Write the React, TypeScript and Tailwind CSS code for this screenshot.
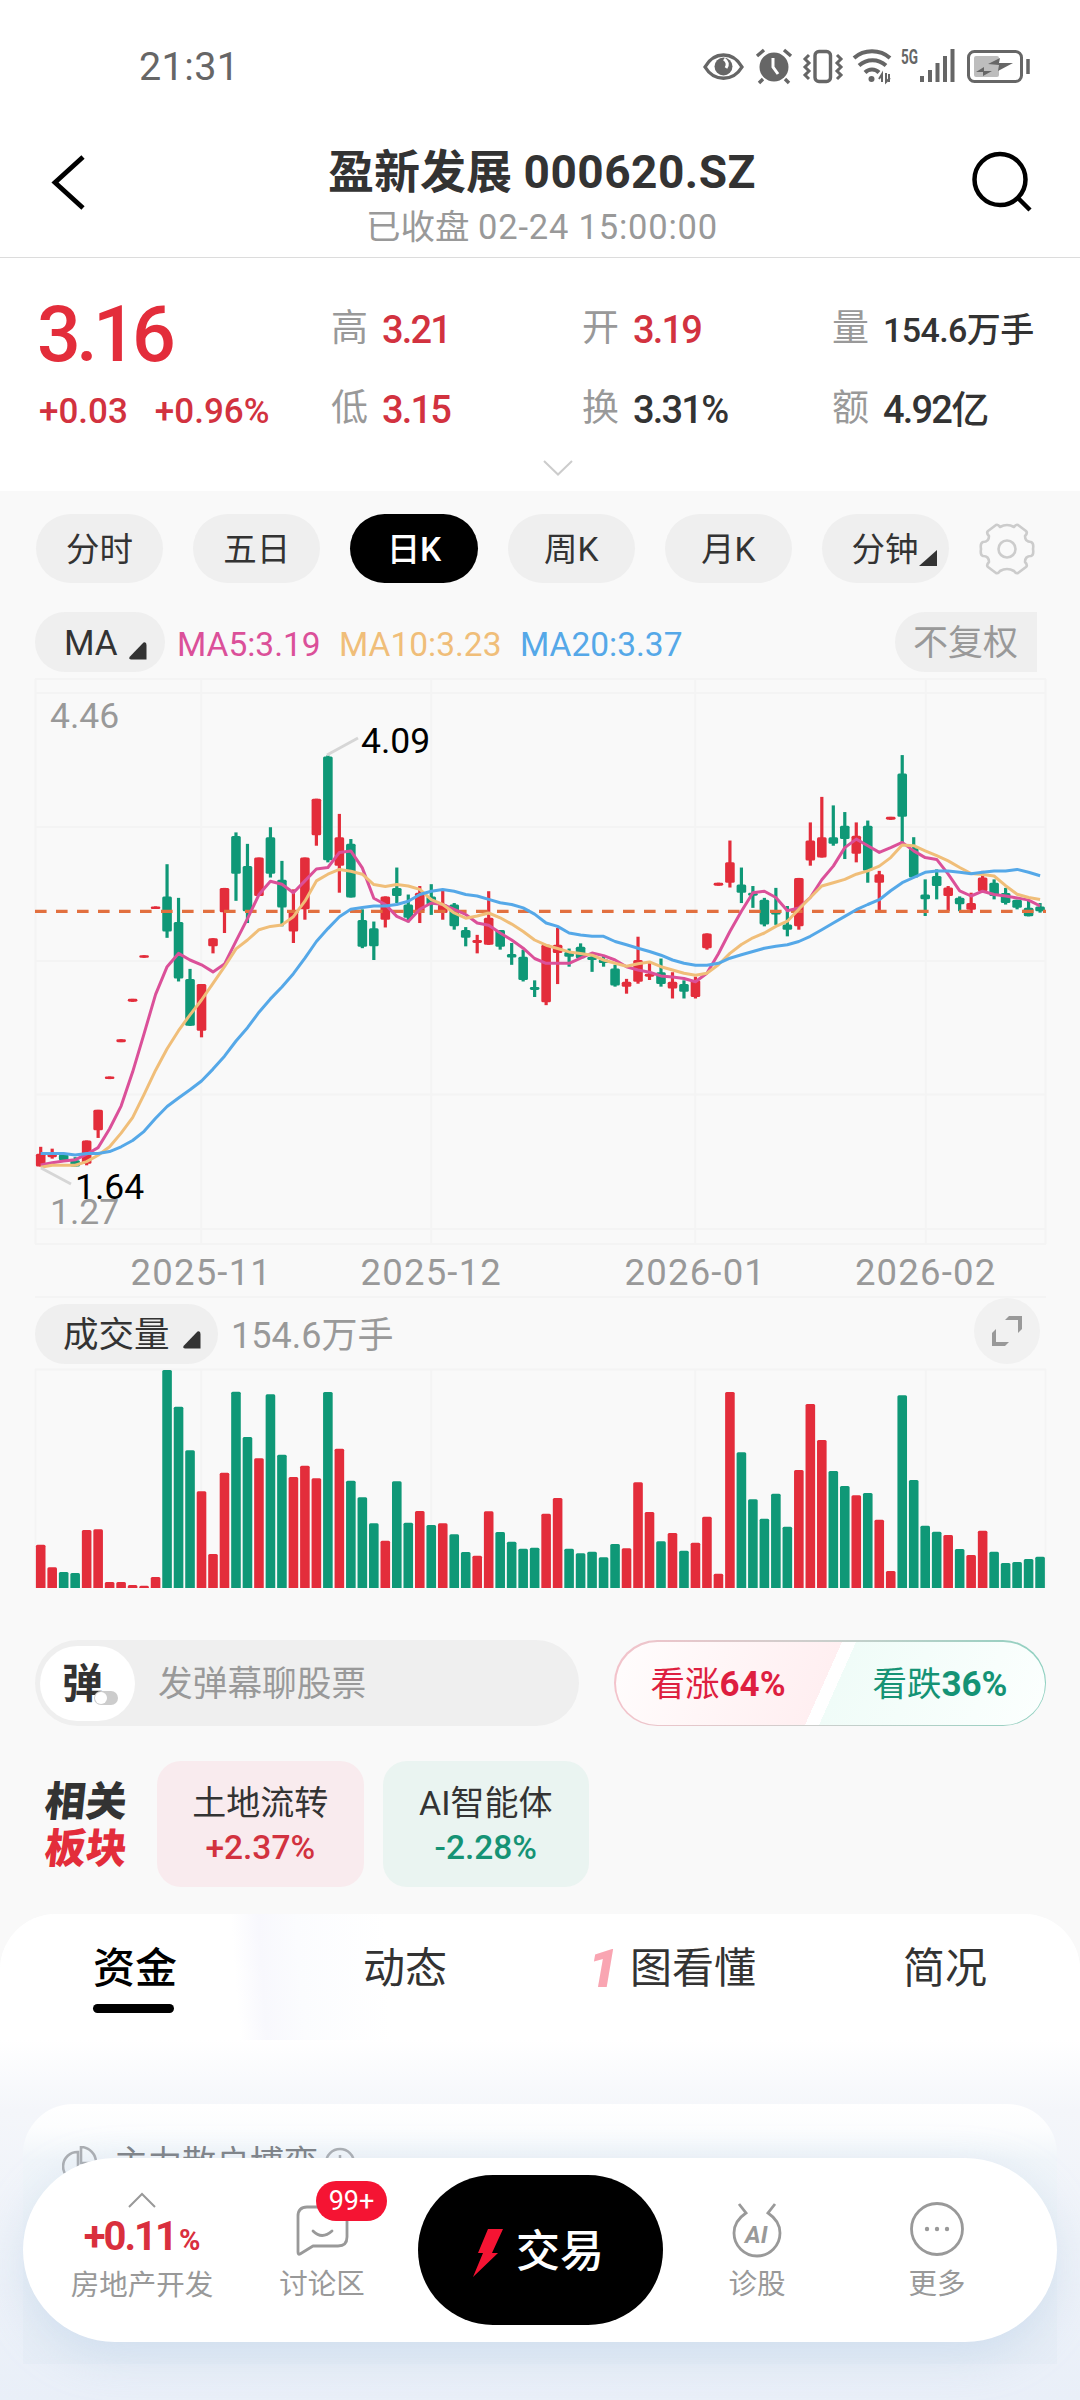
import type { ReactNode } from "react";

const RED = "#e32d3b";
const GREEN = "#0f9877";

// [direction, high, body top, body bottom, low, volume]
type Candle = ["r" | "g", number, number, number, number, number];

const CANDLES: Candle[] = [
  ["r", 1262, 1281, 1315, 1315, 130],
  ["r", 1267, 1282, 1290, 1294, 62],
  ["g", 1283, 1283, 1298, 1298, 48],
  ["g", 1290, 1298, 1315, 1315, 45],
  ["r", 1245, 1245, 1308, 1312, 174],
  ["r", 1162, 1162, 1217, 1238, 176],
  ["r", 1072, 1072, 1079, 1079, 18],
  ["r", 971, 971, 979, 979, 18],
  ["r", 862, 862, 870, 870, 9],
  ["r", 744, 744, 751, 751, 7],
  ["r", 612, 612, 619, 619, 33],
  ["g", 498, 585, 680, 697, 654],
  ["g", 589, 654, 807, 815, 544],
  ["g", 781, 808, 935, 935, 413],
  ["r", 822, 822, 948, 966, 290],
  ["r", 698, 698, 720, 739, 102],
  ["r", 562, 562, 628, 684, 346],
  ["g", 412, 422, 524, 597, 589],
  ["g", 443, 503, 625, 657, 453],
  ["r", 480, 480, 584, 584, 389],
  ["g", 398, 425, 524, 534, 581],
  ["g", 489, 540, 615, 666, 400],
  ["r", 566, 622, 680, 711, 333],
  ["r", 480, 480, 620, 648, 367],
  ["r", 321, 321, 420, 448, 329],
  ["g", 204, 207, 487, 493, 588],
  ["r", 362, 425, 502, 575, 418],
  ["g", 430, 443, 588, 588, 322],
  ["g", 620, 649, 721, 725, 272],
  ["g", 653, 671, 720, 757, 194],
  ["r", 585, 585, 648, 669, 142],
  ["g", 507, 562, 584, 603, 320],
  ["g", 580, 607, 643, 655, 196],
  ["r", 557, 575, 625, 657, 231],
  ["g", 552, 585, 607, 635, 189],
  ["r", 566, 607, 630, 648, 194],
  ["g", 603, 607, 666, 675, 161],
  ["g", 668, 676, 697, 720, 108],
  ["r", 689, 703, 711, 739, 97],
  ["r", 571, 643, 716, 716, 230],
  ["g", 676, 676, 721, 729, 168],
  ["g", 711, 741, 750, 770, 139],
  ["g", 729, 748, 811, 815, 118],
  ["g", 812, 830, 838, 857, 121],
  ["r", 716, 716, 871, 879, 223],
  ["r", 670, 716, 738, 822, 270],
  ["g", 726, 735, 748, 775, 118],
  ["g", 712, 721, 752, 752, 104],
  ["g", 740, 748, 757, 789, 109],
  ["g", 744, 755, 765, 775, 92],
  ["g", 770, 780, 826, 829, 132],
  ["r", 808, 816, 829, 848, 119],
  ["r", 694, 757, 816, 821, 317],
  ["r", 762, 794, 802, 811, 228],
  ["g", 753, 790, 822, 829, 140],
  ["r", 790, 816, 834, 861, 165],
  ["g", 812, 822, 843, 861, 112],
  ["r", 802, 812, 857, 861, 136],
  ["r", 685, 685, 725, 729, 214],
  ["r", 548, 548, 556, 556, 43],
  ["r", 434, 493, 548, 561, 588],
  ["g", 507, 553, 575, 603, 407],
  ["g", 557, 575, 583, 616, 266],
  ["g", 589, 594, 661, 666, 208],
  ["g", 562, 625, 634, 662, 283],
  ["g", 611, 661, 675, 693, 184],
  ["r", 535, 535, 666, 675, 354],
  ["r", 385, 434, 488, 502, 552],
  ["r", 316, 425, 480, 480, 444],
  ["g", 339, 425, 443, 448, 351],
  ["g", 357, 394, 430, 484, 306],
  ["r", 385, 421, 470, 493, 278],
  ["g", 380, 394, 516, 548, 285],
  ["r", 516, 525, 548, 625, 205],
  ["r", 370, 370, 378, 378, 51],
  ["g", 203, 253, 370, 440, 578],
  ["g", 425, 455, 534, 534, 324],
  ["g", 539, 580, 593, 638, 187],
  ["g", 512, 530, 557, 593, 169],
  ["r", 557, 561, 584, 625, 159],
  ["g", 585, 589, 606, 625, 117],
  ["r", 575, 603, 621, 630, 99],
  ["r", 516, 534, 571, 571, 172],
  ["g", 539, 548, 584, 593, 109],
  ["g", 562, 576, 603, 607, 75],
  ["g", 594, 594, 616, 620, 78],
  ["g", 594, 616, 639, 639, 87],
  ["g", 603, 612, 625, 629, 94],
];

const MA5 = [
  1311, 1305, 1300, 1297, 1282, 1264, 1213, 1152, 1060, 956, 850, 775, 739, 757, 770, 789, 768, 706, 645, 580, 544,
  552, 575, 543, 511, 507, 466, 462, 508, 590, 607, 639, 653, 620, 603, 607, 620, 634, 657, 663, 684, 703, 725, 753,
  766, 766, 766, 752, 738, 745, 757, 775, 784, 790, 800, 803, 807, 816, 793, 740, 680, 625, 575, 571, 588, 624, 616,
  588, 540, 503, 453, 430, 448, 466, 453, 439, 462, 480, 485, 525, 570, 584, 571, 580, 584, 589, 595, 611,
];

const MA10 = [
  1317, 1312, 1312, 1312, 1302, 1285, 1262, 1225, 1183, 1120, 1055, 997, 948, 905, 865, 820, 775, 727, 703, 675, 666,
  662, 640, 598, 543, 525, 512, 517, 525, 553, 558, 553, 557, 566, 594, 607, 630, 644, 638, 630, 643, 660, 680, 703,
  717, 726, 735, 739, 744, 757, 766, 774, 767, 762, 775, 784, 793, 798, 793, 770, 739, 715, 697, 684, 666, 652, 620,
  588, 557, 548, 539, 525, 516, 503, 480, 446, 448, 462, 475, 489, 507, 523, 526, 530, 556, 579, 588, 593,
];

const MA20 = [
  1280, 1280, 1280, 1284, 1280, 1280, 1275, 1262, 1245, 1220, 1185, 1153, 1130, 1108, 1084, 1052, 1017, 976, 940, 898,
  862, 830, 794, 752, 707, 672, 640, 620, 615, 611, 611, 607, 598, 580, 571, 566, 571, 580, 584, 593, 602, 607, 616,
  633, 657, 666, 684, 689, 693, 693, 707, 716, 725, 734, 744, 757, 766, 771, 771, 766, 752, 743, 734, 725, 720, 716,
  707, 693, 675, 657, 639, 621, 607, 594, 570, 548, 534, 520, 516, 516, 520, 524, 520, 516, 516, 512, 520, 529,
];

const GRID_X = [201.3, 431.3, 695.3, 925.7];
const MONTHS = ["2025-11", "2025-12", "2026-01", "2026-02"];

const px = (i: number) => 40.7 + i * 11.487;
const py = (v: number) => 4 + v * 0.3699;
const linePoints = (values: number[]) => values.map((v, i) => `${px(i).toFixed(1)},${py(v).toFixed(1)}`).join(" ");

const QUOTES = [
  { label: "高", value: "3.21", tone: "text-[#d2323f]" },
  { label: "开", value: "3.19", tone: "text-[#d2323f]" },
  { label: "量", value: "154.6万手", tone: "text-[#333]", small: true },
  { label: "低", value: "3.15", tone: "text-[#d2323f]" },
  { label: "换", value: "3.31%", tone: "text-[#333]" },
  { label: "额", value: "4.92亿", tone: "text-[#333]" },
];

const PERIODS = ["分时", "五日", "日K", "周K", "月K", "分钟"];

function StatusBar() {
  return (
    <div className="flex h-[134px] shrink-0 items-center justify-between pl-[139px] pr-[46px] text-[#666]">
      <span className="text-[39.500px] leading-none tracking-[0.400px]">21:31</span>
      <svg width="334" height="40" viewBox="700 46 334 40" fill="none" stroke="#666" strokeWidth="3.4">
        {/* eye */}
        <path d="M705 66c9-16 28-16 37 0c-9 15-28 15-37 0Z" />
        <circle cx="723.5" cy="65.5" r="9" fill="#666" stroke="none" />
        <path d="M724 58c4 3 4 6 2 9" stroke="#fff" strokeWidth="3" />
        {/* alarm */}
        <circle cx="774" cy="66" r="14.5" fill="#666" stroke="none" />
        <path d="M757 55l7-6M791 55l-7-6M763 78l-4 4M785 78l4 4" />
        <path d="M773 57v9l5 7" stroke="#fff" strokeWidth="3" />
        {/* vibrate */}
        <rect x="815" y="50.5" width="15.5" height="30" rx="4" />
        <path d="M809 54l-4 4 4 4-4 4 4 4-4 4 4 4M837 54l4 4-4 4 4 4-4 4 4 4-4 4" strokeWidth="3" />
        {/* wifi */}
        <path d="M854 57c10-9 26-9 36 0M859 64.500c8-7 19-7 27 0M865 71.500c4-4 10-4 14 0" strokeWidth="4" />
        <circle cx="871.500" cy="78" r="3" fill="#666" stroke="none" />
        <path d="M882 81v-8l-3 5M889 73v8M886 72v9l4-4" strokeWidth="2" />
        <text x="901" y="63" fontSize="19.500" fontWeight="700" fill="#666" stroke="none" textLength="17" lengthAdjust="spacingAndGlyphs">
          5G
        </text>
        {/* signal */}
        <path d="M922 75v6M930 69v12M937.500 62v19M945 55v26M952.500 48v33" strokeWidth="4" />
        {/* battery */}
        <rect x="968.500" y="50.500" width="53" height="30" rx="6" strokeWidth="3" />
        <rect x="974" y="55" width="25" height="21" rx="2" fill="#bdbdbd" stroke="none" />
        <path d="M988 63l12-6-1 5h14l-15 8 1-6ZM976 71l8-5v4h8l-9 5v-4Z" fill="#666" stroke="none" />
        <path d="M1028 58v15" strokeWidth="3.500" />
      </svg>
    </div>
  );
}

function Header() {
  return (
    <header className="flex h-[124px] shrink-0 justify-between border-b border-[#dcdcdc] px-[48px]">
      <svg width="64" height="60" viewBox="0 0 64 60" className="mt-[19px]" fill="none" stroke="#000" strokeWidth="4.800">
        <path d="M35 4L7 29.500L35 55" />
      </svg>
      <div className="flex flex-col items-center pt-[13px]">
        <h1 className="text-[46px] leading-[50px] font-bold whitespace-nowrap text-[#333]">
          盈新发展 <span className="tracking-[0.500px]">000620.SZ</span>
        </h1>
        <p className="mt-[10px] text-[34.500px] leading-[40px] whitespace-nowrap text-[#999]">
          已收盘 <span className="tracking-[0.800px]">02-24 15:00:00</span>
        </p>
      </div>
      <svg width="64" height="64" viewBox="0 0 64 64" className="mt-[15px] -mr-[4px]" fill="none" stroke="#000" strokeWidth="4.500">
        <circle cx="28" cy="30.500" r="25.500" />
        <path d="M46 49L58 61" />
      </svg>
    </header>
  );
}

function Quote() {
  return (
    <section className="flex h-[233px] shrink-0 flex-col">
      <div className="flex h-[192px]">
        <div className="w-[331px] pl-[37px] pt-[37px] text-[#e32d3b]">
          <p className="text-[77px] leading-[80px] font-medium tracking-[-4.600px]">3.16</p>
          <p className="mt-[17px] flex gap-[27px] pl-[2px] text-[35px] leading-[40px] font-medium text-[#d2323f]">
            <span>+0.03</span>
            <span>+0.96%</span>
          </p>
        </div>
        <div className="grid grow grid-cols-[251px_250px_1fr] grid-rows-[80px_80px] pt-[32px]">
          {QUOTES.map((q) => (
            <div key={q.label} className="flex items-center whitespace-nowrap">
              <span className="w-[51px] pb-[4px] text-[37px] leading-none text-[#999]">{q.label}</span>
              <span className={`${q.tone} ${q.small ? "text-[34px] tracking-[-0.600px]" : "text-[38px] tracking-[-1.800px]"} leading-none font-medium`}>
                {q.value}
              </span>
            </div>
          ))}
        </div>
      </div>
      <svg width="32" height="20" viewBox="0 0 32 20" className="mt-[9px] ml-[542px]" fill="none" stroke="#ccc" strokeWidth="2">
        <path d="M2 2L16 15.500L30 2" />
      </svg>
    </section>
  );
}

function Periods() {
  return (
    <div className="mt-[23px] ml-[36px] flex h-[69px] items-center gap-[30px]">
      {PERIODS.map((label) => (
        <button
          key={label}
          className={`flex h-[69px] w-[127.200px] items-center justify-center rounded-full pt-[2px] text-[33.500px] leading-none ${
            label === "日K" ? "bg-black font-medium text-white" : "bg-[#efefef] text-[#333]"
          }`}
        >
          {label}
          {label === "分钟" && (
            <svg width="18" height="16" viewBox="0 0 18 16" className="mt-[17px] -mr-[17px]">
              <path d="M18 0V16H0Z" fill="#333" />
            </svg>
          )}
        </button>
      ))}
      <svg width="56" height="56" viewBox="-28 -28 56 56" fill="none" stroke="#ccc" strokeWidth="2.600" strokeLinejoin="round">
        <path d="M-7 -22Q0 -26 7 -22Q9 -25 11 -24L19 -18Q21 -16 18 -13Q18 -7 24 -7Q27 -6 26 0Q27 6 24 7Q18 7 18 13Q21 16 19 18L11 24Q9 25 7 22Q0 18 -7 22Q-9 25 -11 24L-19 18Q-21 16 -18 13Q-18 7 -24 7Q-27 6 -26 0Q-27 -6 -24 -7Q-18 -7 -18 -13Q-21 -16 -19 -18L-11 -24Q-9 -25 -7 -22Z" />
        <circle r="8.500" />
      </svg>
    </div>
  );
}

function Triangle() {
  return (
    <svg width="18" height="18" viewBox="0 0 18 18">
      <path d="M14.500 0.500Q17.500 -0.500 17.500 3V17.500H2Q-1 17 1 14.500Z" fill="#333" />
    </svg>
  );
}

function MaRow() {
  return (
    <div className="mt-[29px] ml-[35px] flex h-[60px] items-center text-[33.500px] leading-none">
      <div className="flex h-[60px] w-[130px] items-center rounded-full bg-[#efefef] pt-[3px] pl-[29px] text-[35px] text-[#333]">
        <span className="w-[65px]">MA</span>
        <span className="mt-[14px]">
          <Triangle />
        </span>
      </div>
      <span className="mt-[5px] ml-[12px] w-[162px] text-[#db5099]">MA5:3.19</span>
      <span className="mt-[5px] w-[181px] text-[#f0be79]">MA10:3.23</span>
      <span className="mt-[5px] text-[#55a8e8]">MA20:3.37</span>
      <span className="mr-[43px] ml-auto flex h-[60px] w-[142px] items-center rounded-l-full bg-[#efefef] pt-[3px] pl-[18px] text-[35px] text-[#999]">
        不复权
      </span>
    </div>
  );
}

function KChart() {
  return (
    <svg width="1080" height="622" viewBox="0 0 1080 622" className="mt-[4px] block">
      <g stroke="#f4f4f4" strokeWidth="2">
        {[3, 17, 151, 285, 418.500, 553, 568, 621].map((y) => (
          <path key={y} d={`M35 ${y}H1046`} />
        ))}
        {[35.500, ...GRID_X, 1045.500].map((x) => (
          <path key={x} d={`M${x} 3V568`} />
        ))}
      </g>
      <text x="50" y="52" fontSize="35.500" fill="#999">4.46</text>
      {CANDLES.map(([dir, high, top, bottom, low], i) => {
        const color = dir === "r" ? RED : GREEN;
        return (
          <g key={i} fill={color}>
            <rect x={px(i) - 1.600} y={py(high)} width="3.200" height={py(low) - py(high)} />
            <rect x={px(i) - 4.800} y={py(top)} width="9.600" height={py(bottom) - py(top)} rx="1.500" />
          </g>
        );
      })}
      <path d="M35 235.300H1046" stroke="#e2703f" strokeWidth="3.200" strokeDasharray="11.600 9.400" />
      <g fill="none" strokeWidth="3" strokeLinejoin="round">
        <polyline points={linePoints(MA5)} stroke="#db5099" />
        <polyline points={linePoints(MA10)} stroke="#f0be79" />
        <polyline points={linePoints(MA20)} stroke="#55a8e8" />
      </g>
      <g stroke="#d6d6d6" strokeWidth="2.800">
        <path d="M327 79L358 62" />
        <path d="M41 492L71 508" />
      </g>
      <text x="361" y="77" fontSize="35.500" fill="#000">4.09</text>
      <text x="75" y="523" fontSize="35.500" fill="#000">1.64</text>
      <text x="50" y="548" fontSize="35.500" fill="#999">1.27</text>
      {MONTHS.map((m, i) => (
        <text key={m} x={GRID_X[i]} y="609" fontSize="36.500" letterSpacing="1.200" textAnchor="middle" fill="#999">
          {m}
        </text>
      ))}
    </svg>
  );
}

function Volume() {
  return (
    <>
      <div className="flex h-[66px] items-end pr-[40px] pl-[35px] leading-none">
        <div className="flex h-[60px] w-[183px] items-center rounded-full bg-[#efefef] pt-[3px] pl-[28px] text-[#333]">
          <span className="w-[120px] text-[35.500px]">成交量</span>
          <span className="mt-[8px]">
            <Triangle />
          </span>
        </div>
        <span className="ml-[13px] flex h-[60px] items-center pt-[4px] text-[36px] text-[#999]">154.6万手</span>
        <div className="ml-auto flex size-[66px] items-center justify-center rounded-full bg-[#f1f1f1]">
          <svg width="30" height="30" viewBox="0 0 30 30" fill="#999">
            <path d="M17 0H30V13L26 17V4H13Z" />
            <path d="M0 17L4 13V26H17L13 30H0Z" />
          </svg>
        </div>
      </div>
      <svg width="1080" height="226" viewBox="0 0 1080 226" className="block">
        <g stroke="#f4f4f4" strokeWidth="2">
          <path d="M35 5.500H1046" />
          {[35.500, ...GRID_X, 1045.500].map((x) => (
            <path key={x} d={`M${x} 5V224`} />
          ))}
        </g>
        {CANDLES.map(([dir, , , , , vol], i) => (
          <path
            key={i}
            d={`M${px(i) - 4.800} 224v${-vol / 3 + 1.500}q0 -1.500 1.500 -1.500h6.600q1.500 0 1.500 1.500v${vol / 3 - 1.500}z`}
            fill={dir === "r" ? RED : GREEN}
          />
        ))}
      </svg>
    </>
  );
}

function ChatRow() {
  return (
    <div className="mt-[50px] ml-[35px] flex h-[86px] items-center">
      <div className="flex h-[86px] w-[544px] items-center rounded-full bg-[#efefef] pl-[5px]">
        <div className="relative flex h-[75px] w-[95px] items-center rounded-full bg-white pt-[2px] pl-[22px] text-[41px] leading-none font-bold text-[#333]">
          弹
          <span className="absolute top-[45px] left-[54px] h-[14px] w-[24px] rounded-full bg-[#ccc] p-[1px]">
            <span className="block size-[12px] rounded-full bg-white" />
          </span>
        </div>
        <span className="mt-[2px] ml-[23px] text-[34.700px] leading-none text-[#999]">发弹幕聊股票</span>
      </div>
      <div className="ml-[35px] h-[86px] w-[432px] rounded-full bg-gradient-to-r from-[#f3c3cb] via-[#c9cfcc] to-[#8fd0c0] p-[1.500px]">
        <div className="flex h-full items-center overflow-hidden rounded-full bg-[linear-gradient(114deg,#fffdfd_0%,#ffeff1_48.500%,#fff_48.500%,#fff_51.500%,#f0fcf8_51.500%,#fcfffe_100%)] pt-[2px] text-[34.500px] leading-none">
          <span className="ml-[35px] text-[#de1f40]">
            看涨<b className="text-[35px]">64%</b>
          </span>
          <span className="mr-[37px] ml-auto text-[#159375]">
            看跌<b className="text-[35px]">36%</b>
          </span>
        </div>
      </div>
    </div>
  );
}

function Sectors() {
  return (
    <div className="mt-[35px] flex h-[126px] items-center">
      <div className="ml-[45px] w-[112px] pt-[3px] text-[41px] leading-[47px] font-black">
        <p className="-skew-x-6 text-[#333]">相关</p>
        <p className="-skew-x-6 text-[#e32d3b]">板块</p>
      </div>
      <Sector name="土地流转" tone="bg-[#f9ebee] text-[#d2323f]">+2.37%</Sector>
      <Sector name="AI智能体" tone="ml-[19px] bg-[#eaf4f1] text-[#159375]">-2.28%</Sector>
    </div>
  );
}

function Sector({ name, tone, children }: { name: string; tone: string; children: ReactNode }) {
  return (
    <div className={`flex h-[126px] w-[206.500px] flex-col items-center rounded-[24px] pt-[20px] ${tone}`}>
      <span className="text-[34px] leading-[44px] text-[#333]">{name}</span>
      <span className="text-[33.500px] leading-[46px] font-medium">{children}</span>
    </div>
  );
}

function DetailTabs() {
  return (
    <section className="flex grow flex-col rounded-t-[56px] bg-white">
      <div className="grid h-[126px] shrink-0 grid-cols-4 rounded-t-[56px] bg-[linear-gradient(86deg,#fff_22%,#f8f8fd_24.500%,#fbfcfe_28%,#fff_36%)] text-[42px] leading-none text-[#333]">
        <div className="flex flex-col items-center pt-[34px] font-medium text-black">
          资金
          <span className="mt-[14px] mr-[4px] h-[9px] w-[81px] rounded-full bg-black" />
        </div>
        <div className="flex justify-center pt-[34px]">动态</div>
        <div className="flex justify-center pt-[34px]">
          <span className="-mt-[3px] mr-[6px] -ml-[6px] w-[36px] text-[54px] leading-[48px] font-black text-[#f9a5b2] italic">1</span>
          图看懂
        </div>
        <div className="flex justify-center pt-[34px]">简况</div>
      </div>
      <div className="flex grow flex-col bg-[linear-gradient(180deg,#fff_0px,#f4f6fa_70px,#eff3f9_200px,#e9eff8_360px)] px-[23px] pt-[64px]">
        <div className="flex h-[260px] items-start rounded-t-[50px] bg-[linear-gradient(180deg,#fff_0px,#fcfdfe_24px,#f0f5f9_56px,#e6edf6_100%)] pt-[42px] pl-[39px] text-[34px] leading-none text-[#7d8085]">
          <svg width="36" height="40" viewBox="0 0 36 40" fill="none" stroke="#aaadb1" strokeWidth="2.600">
            <path d="M16 6A14.500 14.500 0 1 0 30 22H16Z" />
            <path d="M19 1V17H34A15.500 15.500 0 0 0 19 1Z" />
          </svg>
          <span className="ml-[16px]">主力散户博弈</span>
          <svg width="32" height="32" viewBox="0 0 32 32" className="mt-[1px] ml-[6px]" fill="none" stroke="#aaadb1" strokeWidth="2.500">
            <circle cx="16" cy="16" r="14" />
            <path d="M16 8V11M16 14V23" />
          </svg>
        </div>
      </div>
    </section>
  );
}

function BottomNav() {
  return (
    <nav className="absolute top-[2158px] left-[23px] flex h-[184px] w-[1034px] rounded-full bg-white text-[28.500px] leading-none text-[#999] shadow-[0_14px_44px_rgba(170,198,225,0.38)]">
      <div className="flex w-[238px] flex-col items-center pt-[34px]">
        <svg width="28" height="16" viewBox="0 0 28 16" fill="none" stroke="#999" strokeWidth="2">
          <path d="M1 15L14 2L27 15" />
        </svg>
        <p className="mt-[6px] text-[40px] leading-[46px] font-bold tracking-[-2px] text-[#d92f3d]">
          +0.11<span className="ml-[3px] text-[29px] tracking-normal">%</span>
        </p>
        <p className="mt-[9px]">房地产开发</p>
      </div>
      <div className="relative flex w-[122px] flex-col items-center pt-[46px]">
        <svg width="54" height="52" viewBox="0 0 54 52" fill="none" stroke="#999" strokeWidth="2.800" strokeLinejoin="round">
          <path d="M3 12Q3 3 12 3H43Q52 3 52 12V33Q52 42 43 42H18L5 50Q3 51 3 48Z" />
          <path d="M18 27Q27 36 37 27" strokeLinecap="round" />
        </svg>
        <p className="mt-[15px]">讨论区</p>
        <span className="absolute top-[23px] left-[55px] flex h-[40px] w-[71px] items-center justify-center rounded-full bg-[#f51433] pt-[1px] text-[27px] text-white">
          99+
        </span>
      </div>
      <button className="mt-[17px] ml-[35px] flex h-[150px] w-[245px] items-center rounded-full bg-black pl-[55px] text-[44px] font-medium text-white">
        <svg width="30" height="48" viewBox="0 0 30 48" className="mt-[6px]">
          <path d="M15 0H30L19 24H25L0 48L10 24H5Z" fill="#f51433" />
        </svg>
        <span className="mt-[3px] ml-[13px]">交易</span>
      </button>
      <div className="ml-[34px] flex w-[120px] flex-col items-center pt-[44px]">
        <svg width="52" height="56" viewBox="0 0 52 56" fill="none" stroke="#999" strokeWidth="2.800">
          <path d="M8 2L15 11Q3 19 3 31A23 23 0 0 0 49 31Q49 19 37 11L44 2" />
          <text x="14" y="41" fontSize="24" fontWeight="700" fontStyle="italic" fill="#999" stroke="none">
            AI
          </text>
        </svg>
        <p className="mt-[13px]">诊股</p>
      </div>
      <div className="ml-[60px] flex w-[120px] flex-col items-center pt-[44px]">
        <svg width="56" height="56" viewBox="0 0 56 56" fill="none" stroke="#999" strokeWidth="2.800">
          <circle cx="28" cy="27" r="25.500" />
          <g fill="#999" stroke="none">
            <circle cx="18" cy="27" r="2.200" />
            <circle cx="28" cy="27" r="2.200" />
            <circle cx="38" cy="27" r="2.200" />
          </g>
        </svg>
        <p className="mt-[13px]">更多</p>
      </div>
    </nav>
  );
}

export default function App() {
  return (
    <div className="relative flex h-[2400px] w-[1080px] flex-col overflow-hidden bg-white font-['Roboto','Noto_Sans_CJK_SC',sans-serif]">
      <StatusBar />
      <Header />
      <Quote />
      <main className="flex grow flex-col bg-[#f9f9f9]">
        <Periods />
        <MaRow />
        <KChart />
        <Volume />
        <ChatRow />
        <Sectors />
        <div className="mt-[27px] flex grow flex-col">
          <DetailTabs />
        </div>
      </main>
      <BottomNav />
    </div>
  );
}
